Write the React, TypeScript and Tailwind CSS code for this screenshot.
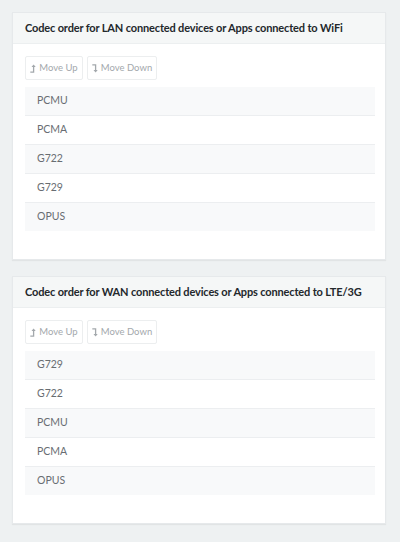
import React from "react";

const lanCodecs = ["PCMU", "PCMA", "G722", "G729", "OPUS"];
const wanCodecs = ["G729", "G722", "PCMU", "PCMA", "OPUS"];

const LevelUp = () => (
    <svg width="6" height="9" viewBox="0 0 6 9" fill="none" className="mr-[3px] shrink-0">
        <path d="M0.3 8.2H3.6V2.2" stroke="currentColor" strokeWidth="1.3" />
        <path d="M1.5 3L3.6 0.4L5.7 3Z" fill="currentColor" />
    </svg>
);

const LevelDown = () => (
    <svg width="6" height="9" viewBox="0 0 6 9" fill="none" className="mr-[3px] shrink-0">
        <path d="M0.3 0.8H3.6V6.8" stroke="currentColor" strokeWidth="1.3" />
        <path d="M1.5 6L3.6 8.6L5.7 6Z" fill="currentColor" />
    </svg>
);

const CodecCard = ({ title, codecs }: { title: string; codecs: string[] }) => (
    <div className="ml-[12px] w-[374px] bg-white border border-[#e6e9eb] shadow-[0_1px_1px_rgba(0,0,0,0.05)]">
        {/* Header */}
        <div className="h-[31px] bg-[#f5f7f7] border-b border-[#eceff0] pl-3 flex items-center">
            <h3 className="text-[11px] font-bold text-[#23282c] tracking-[-0.15px] whitespace-nowrap">{title}</h3>
        </div>

        <div className="pl-3 pr-[10px] pt-3 pb-[28px]">
            {/* Buttons */}
            <div className="flex gap-[4px]">
                <button className="h-[24px] w-[58px] border border-[#eceeef] rounded-[2px] flex items-center justify-center text-[9.5px] whitespace-nowrap text-[#a3a8ac]">
                    <LevelUp />
                    Move Up
                </button>
                <button className="h-[24px] w-[70px] border border-[#eceeef] rounded-[2px] flex items-center justify-center text-[9.5px] whitespace-nowrap text-[#a3a8ac]">
                    <LevelDown />
                    Move Down
                </button>
            </div>

            {/* Codec list */}
            <ul className="mt-[7px]">
                {codecs.map((c, i) => (
                    <li
                        key={c}
                        className={`h-[29px] last:h-[28px] pl-3 flex items-center text-[10.5px] text-[#686d72] border-b border-[#eceef0] last:border-b-0 ${i % 2 === 0 ? "bg-[#f8f9fa]" : "bg-white"}`}
                    >
                        {c}
                    </li>
                ))}
            </ul>
        </div>
    </div>
);

export default function App() {
    return (
        <div className="min-h-[542px] bg-[#eef1f2] pt-[12px] pb-4 flex flex-col gap-4" style={{ fontFamily: "Lato, 'Open Sans', sans-serif" }}>
            <CodecCard title="Codec order for LAN connected devices or Apps connected to WiFi" codecs={lanCodecs} />
            <CodecCard title="Codec order for WAN connected devices or Apps connected to LTE/3G" codecs={wanCodecs} />
        </div>
    );
}
